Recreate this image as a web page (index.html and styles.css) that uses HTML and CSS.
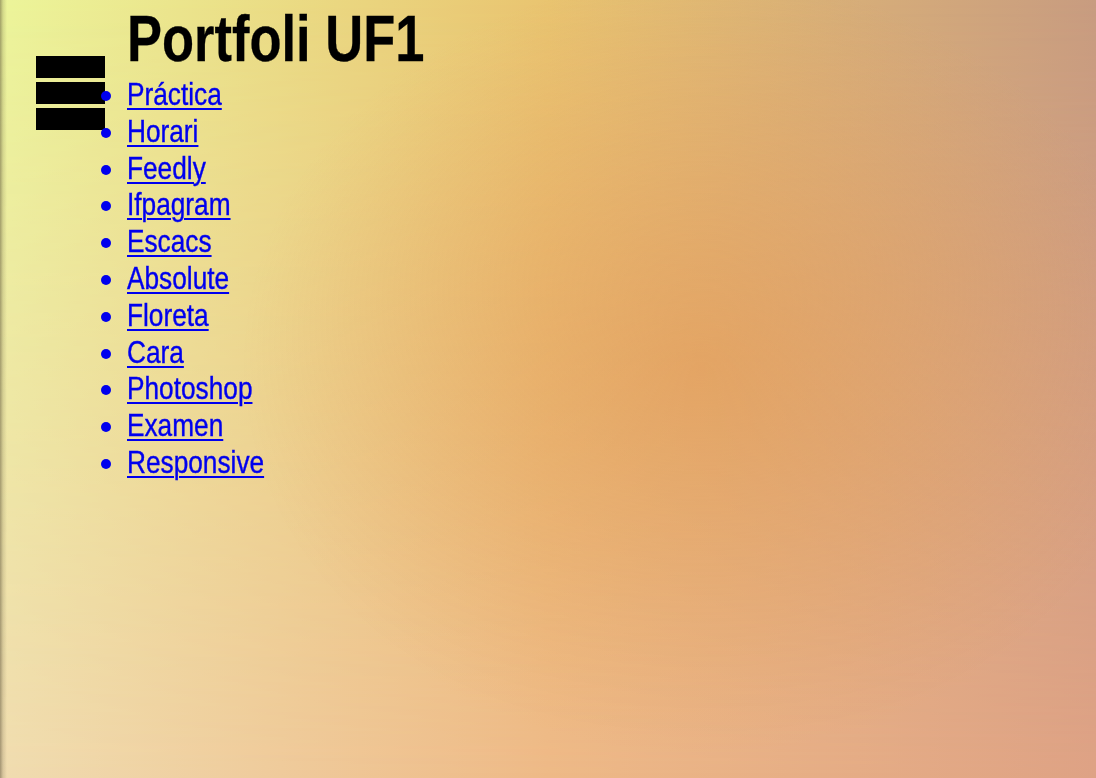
FILE: index.html
```html
<!DOCTYPE html>
<html lang="ca">
<head>
<meta charset="utf-8">
<title>Portfoli UF1</title>
<link rel="stylesheet" href="styles.css">
</head>
<body>
<div class="bg-bottom"></div>
<div class="bg-glow"></div>
<div class="menu-toggle" aria-label="Menú">
  <span class="bar"></span>
  <span class="bar"></span>
  <span class="bar"></span>
</div>
<main class="page">
  <h1 class="title"><span class="narrow">Portfoli UF1</span></h1>
  <ul class="links">
    <li><a href="#"><span class="narrow">Práctica</span></a></li>
    <li><a href="#"><span class="narrow">Horari</span></a></li>
    <li><a href="#"><span class="narrow">Feedly</span></a></li>
    <li><a href="#"><span class="narrow">Ifpagram</span></a></li>
    <li><a href="#"><span class="narrow">Escacs</span></a></li>
    <li><a href="#"><span class="narrow">Absolute</span></a></li>
    <li><a href="#"><span class="narrow">Floreta</span></a></li>
    <li><a href="#"><span class="narrow">Cara</span></a></li>
    <li><a href="#"><span class="narrow">Photoshop</span></a></li>
    <li><a href="#"><span class="narrow">Examen</span></a></li>
    <li><a href="#"><span class="narrow">Responsive</span></a></li>
  </ul>
</main>
</body>
</html>
```
FILE: styles.css
```css
html {
  height: 100%;
  background: linear-gradient(to right, #ecf59a 0%, #e9c470 50%, #c89c80 100%);
}
body {
  margin: 0;
  min-height: 100%;
  font-family: "Liberation Sans", Arial, sans-serif;
  position: relative;
}
.bg-bottom {
  position: fixed;
  inset: 0;
  z-index: -2;
  background: linear-gradient(to right, #f0dcb0 0%, #eeb987 50%, #dea285 100%);
  -webkit-mask-image: linear-gradient(to bottom, transparent 0%, #000 100%);
  mask-image: linear-gradient(to bottom, transparent 0%, #000 100%);
}
.bg-glow {
  position: fixed;
  inset: 0;
  z-index: -1;
  background:
    linear-gradient(to right, rgba(70, 60, 40, 0.45) 0px, rgba(70, 60, 40, 0.15) 3px, rgba(70, 60, 40, 0) 7px),
    radial-gradient(ellipse 42% 50% at 64% 47%, rgba(226, 150, 80, 0.55) 0%, rgba(226, 150, 80, 0) 100%);
}
.page {
  position: relative;
  z-index: 1;
  padding-left: 127px;
}
.narrow {
  display: inline-block;
  transform: scaleX(0.82);
  transform-origin: 0 50%;
  white-space: nowrap;
}
.title {
  margin: 0;
  font-size: 64px;
  font-weight: bold;
  color: #000;
  line-height: 73px;
  padding-top: 3px;
  height: 73px;
  -webkit-text-stroke: 0.3px #000;
}
.links {
  margin: 0;
  padding: 0;
  font-size: 32px;
  color: #0000ee;
}
.links li {
  line-height: 36.8px;
}
.links a {
  color: #0000ee;
  text-decoration: none;
}
.links .narrow {
  text-decoration: underline;
  text-decoration-thickness: 2px;
  text-underline-offset: 3px;
  -webkit-text-stroke: 0.4px #0000ee;
}
.menu-toggle {
  position: absolute;
  left: 36px;
  top: 56px;
  width: 69px;
  display: flex;
  flex-direction: column;
  gap: 4px;
}
.menu-toggle .bar {
  display: block;
  height: 22px;
  background: #000;
}
```
